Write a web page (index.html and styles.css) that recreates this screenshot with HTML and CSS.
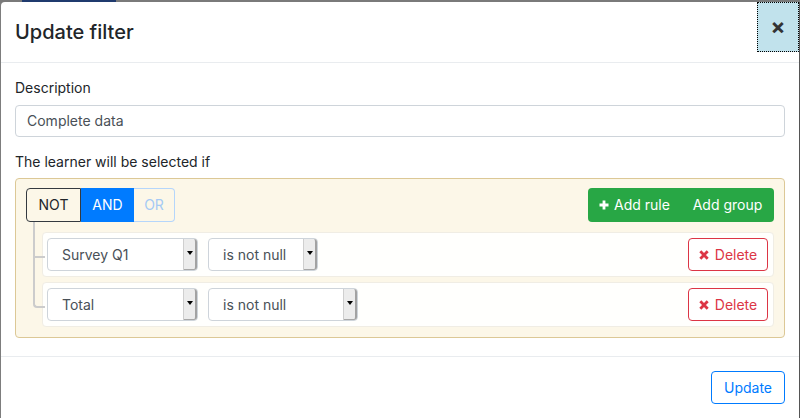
FILE: index.html
```html
<!DOCTYPE html>
<html lang="en">
<head>
<meta charset="utf-8">
<title>Update filter</title>
<link rel="stylesheet" href="styles.css">
</head>
<body>
<div class="backdrop-strip"><span class="nav-seg"></span></div>
<div class="modal">
  <div class="modal-header">
    <h5 class="modal-title">Update filter</h5>
    <button class="close" type="button">&times;</button>
  </div>
  <div class="modal-body">
    <div class="form-group">
      <label class="label">Description</label>
      <div class="form-control">Complete data</div>
    </div>
    <div class="form-group last">
      <label class="label label-2">The learner will be selected if</label>
      <div class="rules-group">
        <div class="group-header">
          <div class="btn-group">
            <button class="btn btn-not">NOT</button>
            <button class="btn btn-and">AND</button>
            <button class="btn btn-or">OR</button>
          </div>
          <div class="btn-group green">
            <button class="btn btn-success btn-add-rule">
              <svg class="ico" width="10" height="10" viewBox="0 0 10 10"><path d="M5 0.5V9.5M0.5 5H9.5" stroke="#fff" stroke-width="2.8"/></svg>Add rule
            </button>
            <button class="btn btn-success btn-add-group">Add group</button>
          </div>
        </div>
        <ul class="rules-list">
          <li class="rule">
            <div class="sel w-field"><span class="sel-val">Survey Q1</span><span class="sel-arrow"><i class="tri"></i></span></div>
            <div class="sel w-op-short"><span class="sel-val">is not null</span><span class="sel-arrow"><i class="tri"></i></span></div>
            <button class="btn btn-delete"><svg class="ico-x" width="10" height="10" viewBox="0 0 10 10"><path d="M1.3 1.3L8.7 8.7M8.7 1.3L1.3 8.7" stroke="#dc3545" stroke-width="2.8"/></svg>Delete</button>
          </li>
          <li class="rule">
            <div class="sel w-field"><span class="sel-val">Total</span><span class="sel-arrow"><i class="tri"></i></span></div>
            <div class="sel w-op-long"><span class="sel-val">is not null</span><span class="sel-arrow"><i class="tri"></i></span></div>
            <button class="btn btn-delete"><svg class="ico-x" width="10" height="10" viewBox="0 0 10 10"><path d="M1.3 1.3L8.7 8.7M8.7 1.3L1.3 8.7" stroke="#dc3545" stroke-width="2.8"/></svg>Delete</button>
          </li>
        </ul>
      </div>
    </div>
  </div>
  <div class="modal-footer">
    <button class="btn btn-update">Update</button>
  </div>
</div>
</body>
</html>
```
FILE: styles.css
```css
* { box-sizing: border-box; }
html, body { margin: 0; padding: 0; }
body {
  width: 800px;
  height: 418px;
  overflow: hidden;
  background: #7d7d7d;
  font-family: Inter, "Liberation Sans", Arial, sans-serif;
  font-size: 14px;
  color: #212529;
}
.backdrop-strip {
  height: 2px;
  display: flex;
  background: #7a7a7a;
}
.nav-seg {
  display: block;
  margin-left: 22px;
  width: 94px;
  height: 2px;
  background: #1f3a6e;
}
.modal {
  margin-left: 1px;
  width: 799px;
  background: #fff;
  border-right: 1px solid #555;
  border-radius: 4px 0 0 0;
}
.modal-header {
  display: flex;
  align-items: flex-start;
  padding: 15px 14px;
  border-bottom: 1px solid #e9ecef;
}
.modal-title {
  margin: 0;
  font-size: 20px;
  font-weight: 500;
  line-height: 30px;
  color: #212529;
}
.close {
  margin: -15px -14px -5px auto;
  width: 42px;
  height: 50px;
  padding: 0 0 3px;
  background: #c1e2ec;
  border: 1px dotted #000;
  font-family: Inter, "Liberation Sans", Arial, sans-serif;
  font-size: 22px;
  font-weight: 700;
  line-height: 1;
  color: #333;
  display: flex;
  align-items: center;
  justify-content: center;
}
.modal-body {
  padding: 15px 14px 18px;
}
.form-group { margin-bottom: 15px; }
.form-group.last { margin-bottom: 0; }
.label {
  display: block;
  line-height: 20px;
  margin-bottom: 7px;
}
.label-2 { margin-bottom: 6px; }
.form-control {
  height: 32px;
  border: 1px solid #ced4da;
  border-radius: 4px;
  padding: 0 11px;
  line-height: 30px;
  color: #495057;
}
.rules-group {
  background: rgba(250, 240, 210, 0.5);
  border: 1px solid #dcc896;
  border-radius: 4px;
  padding: 9px 10px 10px;
}
.group-header {
  display: flex;
  justify-content: space-between;
  align-items: center;
}
.btn-group { display: flex; }
.btn {
  font-family: Inter, "Liberation Sans", Arial, sans-serif;
  font-size: 14px;
  line-height: 20px;
  height: 34px;
  padding: 0;
  border: 1px solid transparent;
  background: transparent;
  display: flex;
  align-items: center;
  justify-content: center;
  cursor: pointer;
}
.btn-not {
  width: 55px;
  border-color: #343a40;
  border-radius: 4px 0 0 4px;
  color: #212529;
}
.btn-and {
  width: 53px;
  background: #007bff;
  border-color: #007bff;
  color: #fff;
}
.btn-or {
  width: 41px;
  border-color: #b5d6fb;
  border-left: 0;
  border-radius: 0 4px 4px 0;
  color: #a4caf5;
}
.green {
  background: #28a745;
  border-radius: 4px;
}
.btn-success { color: #fff; }
.btn-add-rule { width: 93px; }
.btn-add-group { width: 93px; }
.ico { margin-right: 5px; }
.rules-list {
  list-style: none;
  margin: 10px 0 0;
  padding: 0 0 0 16px;
}
.rule {
  position: relative;
  display: flex;
  align-items: center;
  height: 45px;
  padding: 5px 5px 5px 4px;
  background: rgba(255, 255, 255, 0.9);
  border: 1px solid #f0ede4;
  border-radius: 4px;
}
.rule + .rule { margin-top: 5px; }
.rule::before,
.rule::after {
  content: "";
  position: absolute;
  left: -10px;
  width: 10px;
  border-color: #ccc;
  border-style: solid;
}
.rule::before {
  top: -11px;
  height: calc(50% + 12px);
  border-width: 0 0 2px 2px;
}
.rule::after {
  top: 50%;
  height: calc(50% + 6px);
  border-width: 0 0 0 2px;
}
.rule:last-child::before { border-radius: 0 0 0 4px; }
.rule:last-child::after { display: none; }
.sel {
  display: flex;
  height: 33px;
  border: 1px solid #ced4da;
  border-radius: 4px;
  background: #fff;
  margin-right: 10px;
  color: #495057;
}
.w-field { width: 151px; }
.w-op-short { width: 110px; }
.w-op-long { width: 150px; }
.sel-val {
  flex: 1;
  padding-left: 14px;
  line-height: 31px;
  white-space: nowrap;
}
.sel-arrow {
  width: 14px;
  background: #ececec;
  border-left: 1px solid #cfcfcf;
  border-right: 2px solid #a2a2a2;
  border-bottom: 1px solid #a8a8a8;
  border-radius: 0 3px 3px 0;
  display: flex;
  align-items: center;
  justify-content: center;
}
.tri {
  display: block;
  width: 0;
  height: 0;
  border-left: 3px solid transparent;
  border-right: 3px solid transparent;
  border-top: 4px solid #000;
  margin-top: -2px;
}
.btn-delete {
  margin-left: auto;
  width: 80px;
  height: 33px;
  border-color: #dc3545;
  border-radius: 4px;
  color: #dc3545;
  background: #fff;
}
.ico-x { margin-right: 6px; }
.modal-footer {
  display: flex;
  justify-content: flex-end;
  padding: 14px 14px;
  border-top: 1px solid #e9ecef;
}
.btn-update {
  width: 74px;
  height: 33px;
  border-color: #007bff;
  border-radius: 4px;
  color: #007bff;
  background: #fff;
}
```
